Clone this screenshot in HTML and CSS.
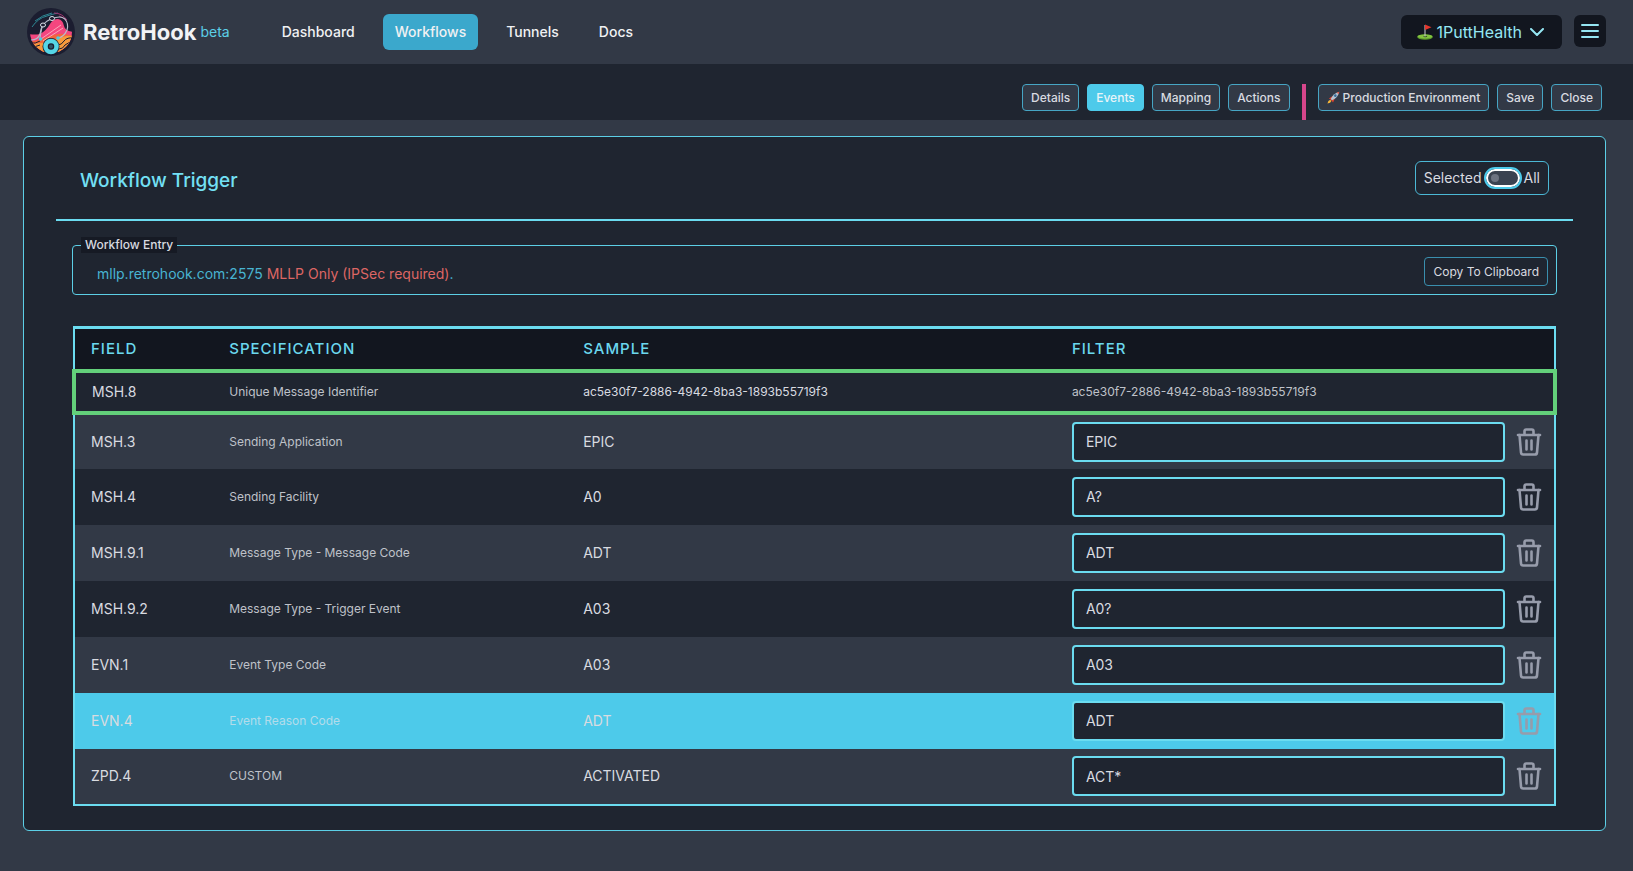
FILE: index.html
```html
<!DOCTYPE html>
<html lang="en">
<head>
    <meta charset="utf-8">
    <title>RetroHook - Workflow Trigger</title>
    <link rel="stylesheet" href="styles.css">
</head>
<body>

<!-- icons -->
<svg class="sprite" aria-hidden="true">
    <symbol id="trash" viewBox="0 0 26 28">
        <g fill="none" stroke="currentColor" stroke-width="2.600" stroke-linecap="round" stroke-linejoin="round">
            <path d="M2 7h22" />
            <path d="M3.500 7l1.500 17.500q.2 2 2.200 2h11.600q2 0 2.200-2L22.500 7" />
            <path d="M8.500 6.500V3.200q0-1.700 1.700-1.700h5.600q1.700 0 1.700 1.700v3.300" />
            <path d="M10.500 12.500v9M15.500 12.500v9" />
        </g>
    </symbol>
</svg>

<header class="topbar">
    <a href="#" class="brand">
        <svg class="logo" viewBox="0 0 48 48" aria-hidden="true">
            <defs><clipPath id="disc"><circle cx="24" cy="24" r="21" /></clipPath></defs>
            <circle cx="24" cy="24" r="24" fill="#1b1d30" />
            <g clip-path="url(#disc)">
                <path d="M0 26q8 1 13 0 6-3 10-10 3-5 8-5 5 1 6 7 1 5 9 6v24H0z" fill="#f4467f" />
                <path d="M0 34q9-1 15-3 9-4 16-5 8-1 17 3v21H0z" fill="#f2653d" />
                <path d="M0 38q8-3 14-3l12-2q10-6 22-5v22H0z" fill="#f79a3c" />
                <path d="M30 37q5 0 7-4 3-4 10-3M32 41q4 0 6-4 3-3 9-3" fill="none" stroke="#1b1d30" stroke-width="1" />
                <path d="M2 35q7 1 11-2M3 39q6 0 10-2" fill="none" stroke="#1b1d30" stroke-width="1" />
                <path d="M34 44q5-5 14-7v11H30z" fill="#7b2b78" />
                <path d="M5 19q6-9 15-11 6-2 11-3M8 13q7-6 17-8" fill="none" stroke="#2e8794" stroke-width="1" />
                <path d="M27 5q8 0 13 7M32 8q5 1 8 6" fill="none" stroke="#a2336e" stroke-width="1" />
                <path d="M16 33l20-13M14 31l20-14" fill="none" stroke="#fbc0c8" stroke-width=".8" />
            </g>
            <path d="M4 32q7 0 9-6 1-6 3-9 4-5 9-6 8-4 13 0 4 5 2 11-3 7-9 8" fill="none" stroke="#b7bdca" stroke-width="1.200" />
            <path d="M15 19l-2 11" fill="none" stroke="#b7bdca" />
            <ellipse cx="16" cy="17" rx="2.500" ry="2" fill="#1b1d30" stroke="#dfe3ec" />
            <ellipse cx="25" cy="10.500" rx="2.500" ry="2" fill="#1b1d30" stroke="#dfe3ec" />
            <circle cx="13.500" cy="31" r="1.800" fill="#4dcbe0" />
            <circle cx="31" cy="30" r="1.800" fill="#4dcbe0" />
            <circle cx="24" cy="38.500" r="8.500" fill="#1b1d30" />
            <circle cx="24" cy="38.500" r="5.500" fill="none" stroke="#55d6e6" stroke-width="4.500" />
            <circle cx="24" cy="38.500" r="2" fill="#2c5365" />
        </svg>
        <span class="brand-name">RetroHook</span>
        <span class="brand-tag">beta</span>
    </a>
    <nav class="nav">
        <a href="#">Dashboard</a>
        <a href="#" class="active">Workflows</a>
        <a href="#">Tunnels</a>
        <a href="#">Docs</a>
    </nav>
    <div class="account">
        <button type="button" class="org">
            <svg class="flag" viewBox="0 0 16 16" aria-hidden="true">
                <ellipse cx="8" cy="13" rx="7.800" ry="2.700" fill="#5b9b2b" />
                <ellipse cx="8" cy="12.400" rx="7.400" ry="2" fill="#83c341" />
                <ellipse cx="8.300" cy="12.500" rx="2" ry=".7" fill="#35551f" />
                <path d="M8 1v11.500" stroke="#c9ccd2" stroke-width="1" />
                <path d="M8 .5l6.500 2.800L8 6z" fill="#e5352b" />
            </svg>
            1PuttHealth
            <svg class="chevron" viewBox="0 0 14 8" aria-hidden="true"><path d="M1 1l6 6 6-6" fill="none" stroke="currentColor" stroke-width="2" stroke-linecap="round" stroke-linejoin="round" /></svg>
        </button>
        <button type="button" class="menu" aria-label="Menu">
            <svg viewBox="0 0 18 16" aria-hidden="true"><path d="M1 2h16M1 8h16M1 14h16" stroke="currentColor" stroke-width="2" stroke-linecap="round" /></svg>
        </button>
    </div>
</header>

<div class="toolbar">
    <div class="tabs">
        <button type="button">Details</button>
        <button type="button" class="active">Events</button>
        <button type="button">Mapping</button>
        <button type="button">Actions</button>
    </div>
    <div class="tabs env">
        <button type="button">
            <svg class="rocket" viewBox="0 0 14 14" aria-hidden="true">
                <path d="M2 8l4-2.500L8.500 8 6.500 12.500 5 10.500 3.500 9z" fill="#d8402f" />
                <path d="M4 8.500Q7 2 13.300.7 12 7 5.500 10z" fill="#b4c3d1" />
                <path d="M10.500 1.700l2.800-1-1 2.800z" fill="#e2513f" />
                <circle cx="9" cy="5" r="1.400" fill="#356c9c" />
                <path d="M.5 13.500Q1 10 3.500 9.500l1.200 1.200Q4 13 .5 13.500z" fill="#f8b739" />
            </svg>
            Production Environment
        </button>
        <button type="button">Save</button>
        <button type="button">Close</button>
    </div>
</div>

<main class="card">
    <div class="card-header">
        <h1>Workflow Trigger</h1>
        <label class="toggle">
            Selected
            <input type="checkbox">
            All
        </label>
    </div>

    <div class="card-body">
        <fieldset class="entry">
            <legend>Workflow Entry</legend>
            <div class="entry-row">
                <p>mllp.retrohook.com:2575 <span class="warn">MLLP Only (IPSec required)</span>.</p>
                <button type="button">Copy To Clipboard</button>
            </div>
        </fieldset>

        <table class="fields">
            <thead>
                <tr>
                    <th class="col-field">Field</th>
                    <th class="col-spec">Specification</th>
                    <th class="col-sample">Sample</th>
                    <th>Filter</th>
                </tr>
            </thead>
            <tbody>
                <tr class="unique">
                    <td>MSH.8</td>
                    <td class="spec">Unique Message Identifier</td>
                    <td class="uuid">ac5e30f7-2886-4942-8ba3-1893b55719f3</td>
                    <td class="spec">ac5e30f7-2886-4942-8ba3-1893b55719f3</td>
                </tr>
                <tr class="light">
                    <td>MSH.3</td>
                    <td class="spec">Sending Application</td>
                    <td>EPIC</td>
                    <td><div class="filter"><input type="text" aria-label="MSH.3 filter" value="EPIC"><button type="button" aria-label="Delete MSH.3"><svg><use href="#trash" /></svg></button></div></td>
                </tr>
                <tr>
                    <td>MSH.4</td>
                    <td class="spec">Sending Facility</td>
                    <td>A0</td>
                    <td><div class="filter"><input type="text" aria-label="MSH.4 filter" value="A?"><button type="button" aria-label="Delete MSH.4"><svg><use href="#trash" /></svg></button></div></td>
                </tr>
                <tr class="light">
                    <td>MSH.9.1</td>
                    <td class="spec">Message Type - Message Code</td>
                    <td>ADT</td>
                    <td><div class="filter"><input type="text" aria-label="MSH.9.1 filter" value="ADT"><button type="button" aria-label="Delete MSH.9.1"><svg><use href="#trash" /></svg></button></div></td>
                </tr>
                <tr>
                    <td>MSH.9.2</td>
                    <td class="spec">Message Type - Trigger Event</td>
                    <td>A03</td>
                    <td><div class="filter"><input type="text" aria-label="MSH.9.2 filter" value="A0?"><button type="button" aria-label="Delete MSH.9.2"><svg><use href="#trash" /></svg></button></div></td>
                </tr>
                <tr class="light">
                    <td>EVN.1</td>
                    <td class="spec">Event Type Code</td>
                    <td>A03</td>
                    <td><div class="filter"><input type="text" aria-label="EVN.1 filter" value="A03"><button type="button" aria-label="Delete EVN.1"><svg><use href="#trash" /></svg></button></div></td>
                </tr>
                <tr class="current">
                    <td>EVN.4</td>
                    <td class="spec">Event Reason Code</td>
                    <td>ADT</td>
                    <td><div class="filter"><input type="text" aria-label="EVN.4 filter" value="ADT"><button type="button" aria-label="Delete EVN.4"><svg><use href="#trash" /></svg></button></div></td>
                </tr>
                <tr class="light">
                    <td>ZPD.4</td>
                    <td class="spec">CUSTOM</td>
                    <td>ACTIVATED</td>
                    <td><div class="filter"><input type="text" aria-label="ZPD.4 filter" value="ACT*"><button type="button" aria-label="Delete ZPD.4"><svg><use href="#trash" /></svg></button></div></td>
                </tr>
            </tbody>
        </table>
    </div>
</main>

</body>
</html>
```

FILE: styles.css
```css
* {
    box-sizing: border-box;
}
body {
    margin: 0;
    background: #323946;
    color: #d9dbe0;
    font-family: Inter, "Liberation Sans", sans-serif;
    font-size: 14px;
    line-height: 20px;
}
button, input {
    font: inherit;
    color: inherit;
}
button {
    cursor: pointer;
}
a {
    text-decoration: none;
    color: inherit;
}
.sprite {
    display: none;
}

/* top bar */
.topbar {
    display: flex;
    align-items: center;
    height: 64px;
    padding: 0 27px;
}
.brand {
    display: flex;
    align-items: center;
}
.logo {
    width: 48px;
    height: 48px;
    margin-right: 8px;
}
.brand-name {
    font-size: 22px;
    font-weight: 700;
    color: #f2f3f5;
}
.brand-tag {
    margin-left: 4px;
    font-size: 14px;
    color: #5ccfe6;
}
.nav {
    display: flex;
    gap: 16px;
    margin-left: 40px;
    font-weight: 500;
    color: #f0f1f3;
}
.nav a {
    padding: 8px 12px;
    border-radius: 6px;
}
.nav .active {
    background: #3ba8cc;
}
.account {
    display: flex;
    gap: 12px;
    margin-left: auto;
    color: #95e6f3;
}
.org {
    display: flex;
    align-items: center;
    height: 34px;
    padding: 0 18px 0 16px;
    border: 0;
    border-radius: 6px;
    background: #12161f;
    font-size: 16px;
}
.flag {
    width: 16px;
    height: 16px;
    margin-right: 4px;
}
.chevron {
    width: 14px;
    height: 8px;
    margin-left: 8px;
}
.menu {
    width: 32px;
    height: 32px;
    padding: 7px;
    border: 0;
    border-radius: 6px;
    background: #12161f;
}
.menu svg {
    display: block;
    width: 18px;
    height: 16px;
}

/* toolbar */
.toolbar {
    display: flex;
    justify-content: flex-end;
    height: 56px;
    padding: 20px 31px 0 0;
    background: #1f2530;
}
.tabs {
    display: flex;
    align-items: flex-start;
    gap: 8px;
}
.tabs button {
    display: flex;
    align-items: center;
    height: 27px;
    padding: 0 8px;
    border: 1px solid #46a5c4;
    border-radius: 4px;
    background: #323946;
    font-size: 12px;
    font-weight: 500;
}
.tabs .active {
    border-color: #4dcaea;
    background: #4dcaea;
    color: #e8f4f8;
}
.env {
    margin-left: 12px;
    padding-left: 12px;
    border-left: 4px solid #d6468b;
}
.rocket {
    width: 13px;
    height: 13px;
    margin-right: 3px;
}

/* card */
.card {
    margin: 16px 27px 40px 23px;
    padding: 24px 32px;
    border: 1px solid #5ccfe6;
    border-radius: 6px;
    background: #1f2530;
}
.card-header {
    display: flex;
    align-items: flex-start;
    justify-content: space-between;
    height: 60px;
    padding: 0 24px;
    border-bottom: 2px solid #6bdcf0;
}
h1 {
    margin: 8px 0 0;
    font-size: 19px;
    font-weight: 500;
    line-height: 24px;
    color: #73e0f5;
}
.toggle {
    display: flex;
    align-items: center;
    gap: 4px;
    height: 34px;
    padding: 0 8px;
    border: 1px solid #4bb8d6;
    border-radius: 6px;
}
.toggle input {
    appearance: none;
    display: flex;
    align-items: center;
    width: 34px;
    height: 18px;
    margin: 0;
    padding: 0 3px;
    border: 2px solid #fff;
    border-radius: 9px;
    outline: 2px solid #4dcaea;
    background: #3a4250;
}
.toggle input::before {
    content: "";
    width: 8px;
    height: 8px;
    border-radius: 50%;
    background: #6c7280;
}
.card-body {
    padding: 16px 16px 0;
}
.entry {
    margin: 0 0 31px;
    padding: 4px 8px 8px;
    border: 1px solid #5ccfe6;
    border-radius: 4px;
}
.entry legend {
    padding: 0 4px;
    background: #161a24;
    font-size: 12px;
    font-weight: 500;
    line-height: 16px;
}
.entry-row {
    display: flex;
    align-items: center;
    justify-content: space-between;
    padding-left: 16px;
}
.entry p {
    margin: 4px 0 0;
    color: #48b4d2;
}
.entry .warn {
    color: #dd6664;
}
.entry button {
    height: 29px;
    padding: 0 8px;
    border: 1px solid #3a8fae;
    border-radius: 4px;
    background: transparent;
    font-size: 12px;
}

/* fields table */
.fields {
    width: 100%;
    table-layout: fixed;
    border-collapse: collapse;
    border: 2px solid #6bdcf0;
    border-top-width: 3px;
}
.fields thead {
    background: #12161f;
}
.fields th {
    height: 43px;
    padding: 0 16px;
    font-size: 15px;
    font-weight: 500;
    letter-spacing: 1px;
    text-align: left;
    text-transform: uppercase;
    color: #6bd8ee;
}
.col-field {
    width: 9.400%;
}
.col-spec {
    width: 23.900%;
}
.col-sample {
    width: 33%;
}
.fields td {
    height: 56px;
    padding: 0 12px 0 16px;
}
.fields .unique {
    border: 4px solid #63d07a;
}
.fields .unique td {
    height: 42px;
}
.fields .spec {
    font-size: 12px;
    color: #bfc2c9;
}
.fields .uuid {
    font-size: 12px;
}
.fields .light {
    background: #323946;
}
.fields .current {
    background: #4dcaea;
}
.fields .current .spec {
    color: #b3dcea;
}
.filter {
    display: flex;
    align-items: center;
    gap: 11px;
}
.filter input {
    flex: 1;
    min-width: 0;
    height: 40px;
    padding: 0 12px;
    border: 2px solid #6bdcf0;
    border-radius: 4px;
    background: #1f2530;
}
.filter button {
    width: 26px;
    height: 28px;
    padding: 0;
    border: 0;
    background: none;
    color: #979cab;
}
.filter svg {
    display: block;
    width: 26px;
    height: 28px;
}
```
